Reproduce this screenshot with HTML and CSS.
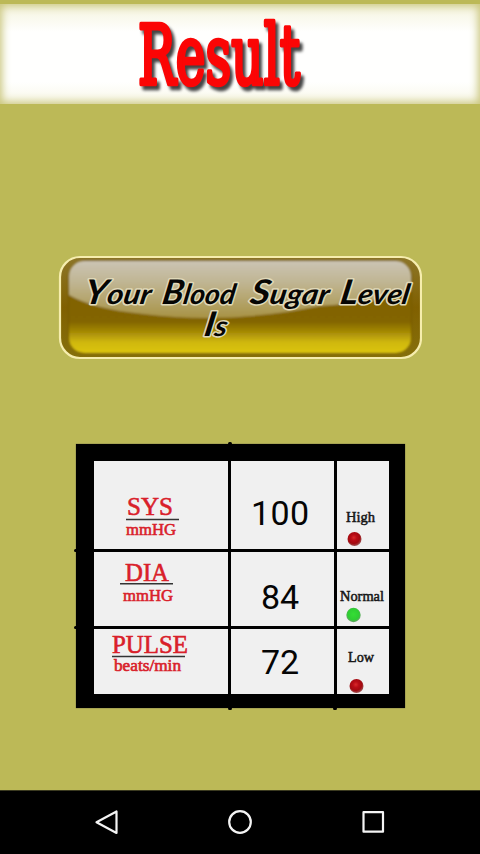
FILE: index.html
```html
<!DOCTYPE html>
<html lang="en">
<head>
<meta charset="utf-8">
<title>Result</title>
<link rel="stylesheet" href="styles.css">
</head>
<body>
<header class="header">
  <svg class="title" width="480" height="100" viewBox="0 0 480 100">
    <text class="title-text" x="138" y="80" textLength="162" lengthAdjust="spacingAndGlyphs">Result</text>
  </svg>
</header>
<main class="content">
  <svg class="banner" width="364" height="106" viewBox="0 0 364 106">
    <defs>
      <linearGradient id="rim" x1="0" y1="0" x2="0" y2="1">
        <stop offset="0" stop-color="#8d7629"/><stop offset=".5" stop-color="#806000"/><stop offset="1" stop-color="#86700b"/>
      </linearGradient>
      <linearGradient id="gold" x1="0" y1="0" x2="0" y2="1">
        <stop offset="0" stop-color="#806200"/><stop offset=".66" stop-color="#836500"/><stop offset=".77" stop-color="#a58a06"/><stop offset=".88" stop-color="#cfb70e"/><stop offset="1" stop-color="#dcc512"/>
      </linearGradient>
      <linearGradient id="shine" x1="0" y1="0" x2="0" y2="1">
        <stop offset="0" stop-color="#cbc4b4"/><stop offset=".4" stop-color="#bfb490"/><stop offset="1" stop-color="#a89345"/>
      </linearGradient>
      <clipPath id="inner"><rect x="11" y="6" width="342" height="92" rx="15"/></clipPath>
      <filter id="soft"><feGaussianBlur stdDeviation="1"/></filter>
    </defs>
    <rect x="2" y="2" width="361" height="101" rx="20" fill="url(#rim)" stroke="#f6edae" stroke-width="2.2"/>
    <g filter="url(#soft)">
      <rect x="10" y="5" width="344" height="94" rx="17" fill="#735600"/>
      <g clip-path="url(#inner)">
        <rect x="11" y="6" width="342" height="92" fill="url(#gold)"/>
        <path d="M11 6H353V36Q320 47 262 51Q170 70 85 59Q35 54 11 40Z" fill="url(#shine)"/>
      </g>
    </g>
    <g class="script">
      <text transform="translate(25 49) skewX(-10)" textLength="67" lengthAdjust="spacingAndGlyphs"><tspan class="cap">Y</tspan>our</text>
      <text transform="translate(103 49) skewX(-10)" textLength="73" lengthAdjust="spacingAndGlyphs"><tspan class="cap">B</tspan>lood</text>
      <text transform="translate(191 49) skewX(-10)" textLength="79" lengthAdjust="spacingAndGlyphs"><tspan class="cap">S</tspan>ugar</text>
      <text transform="translate(281 49) skewX(-10)" textLength="69" lengthAdjust="spacingAndGlyphs"><tspan class="cap">L</tspan>evel</text>
      <text transform="translate(145 81) skewX(-10)" textLength="23" lengthAdjust="spacingAndGlyphs"><tspan class="cap">I</tspan>s</text>
    </g>
  </svg>

  <section class="monitor">
    <i class="tick tick-top"></i><i class="tick tick-bottom-a"></i><i class="tick tick-bottom-b"></i><i class="tick tick-left-a"></i><i class="tick tick-left-b"></i>
    <svg class="cell label" viewBox="0 0 134 88">
      <text class="name" x="33" y="54" textLength="46" lengthAdjust="spacingAndGlyphs">SYS</text>
      <path class="rule" d="M32 58.5H85"/>
      <text class="unit" x="32" y="74" textLength="50" lengthAdjust="spacingAndGlyphs">mmHG</text>
    </svg>
    <svg class="cell value" viewBox="0 0 103 88"><text x="20" y="64" textLength="58">100</text></svg>
    <svg class="cell status" viewBox="0 0 52 88">
      <defs>
        <radialGradient id="red" cx=".45" cy=".4" r=".6"><stop offset="0" stop-color="#d92a2a"/><stop offset=".35" stop-color="#b90d17"/><stop offset=".7" stop-color="#a30a10"/><stop offset="1" stop-color="#9c5555"/></radialGradient>
        <radialGradient id="green" cx=".5" cy=".45" r=".55"><stop offset="0" stop-color="#35dd35"/><stop offset=".7" stop-color="#2fce32"/><stop offset="1" stop-color="#6c9f6c"/></radialGradient>
      </defs>
      <text x="9" y="61" textLength="29" lengthAdjust="spacingAndGlyphs">High</text>
      <circle cx="17.5" cy="78" r="7" fill="url(#red)"/>
    </svg>

    <svg class="cell label" viewBox="0 0 134 74">
      <text class="name" x="31" y="29" textLength="44" lengthAdjust="spacingAndGlyphs">DIA</text>
      <path class="rule" d="M26 31.8H79"/>
      <text class="unit" x="29" y="49" textLength="50" lengthAdjust="spacingAndGlyphs">mmHG</text>
    </svg>
    <svg class="cell value" viewBox="0 0 103 74"><text x="30" y="57" textLength="38">84</text></svg>
    <svg class="cell status" viewBox="0 0 52 74">
      <text x="3" y="49" textLength="44" lengthAdjust="spacingAndGlyphs">Normal</text>
      <circle cx="16.5" cy="63" r="7.2" fill="url(#green)"/>
    </svg>

    <svg class="cell label" viewBox="0 0 134 65">
      <text class="name name-low" x="18" y="24" textLength="76" lengthAdjust="spacingAndGlyphs">PULSE</text>
      <path class="rule" d="M18 27.5H91"/>
      <text class="unit unit-low" x="20" y="42" textLength="67" lengthAdjust="spacingAndGlyphs">beats/min</text>
    </svg>
    <svg class="cell value" viewBox="0 0 103 65"><text x="30" y="45" textLength="38">72</text></svg>
    <svg class="cell status" viewBox="0 0 52 65">
      <text x="11" y="33" textLength="26" lengthAdjust="spacingAndGlyphs">Low</text>
      <circle cx="19.5" cy="57" r="7" fill="url(#red)"/>
    </svg>
  </section>
</main>
<nav class="navbar">
  <svg width="26" height="26" viewBox="0 0 26 26"><path d="M22.5 2.5V24L2.5 13.2Z"/></svg>
  <svg width="26" height="26" viewBox="0 0 26 26"><circle cx="13" cy="13" r="10.8"/></svg>
  <svg width="26" height="26" viewBox="0 0 26 26"><rect x="3.5" y="3.2" width="19.5" height="19.5"/></svg>
</nav>
</body>
</html>
```
FILE: styles.css
```css
* { box-sizing: border-box; }
body {
  margin: 0;
  width: 480px;
  height: 854px;
  display: flex;
  flex-direction: column;
  overflow: hidden;
  background: #bcb957;
}
svg { display: block; }
.header {
  height: 100px;
  margin-top: 4px;
  background: linear-gradient(#f4f3dd, #fffffe 28%, #fffffe 78%, #f8f7e8);
  box-shadow: inset 0 0 9px 2px #c9c57b;
}
.title-text {
  font: 82px "DejaVu Serif", serif;
  fill: #fb0505;
  stroke: #fb0505;
  stroke-width: 4.6px;
  stroke-linejoin: round;
  filter: drop-shadow(3px 4px 1.5px #444);
}
.content {
  flex: 1;
  display: flex;
  flex-direction: column;
  align-items: flex-start;
  padding-top: 151px;
}
.banner { margin-left: 58px; }
.script {
  font: italic bold 28px Lato, sans-serif;
  fill: #060604;
  stroke: #e0d9b9;
  stroke-width: 3px;
  stroke-linejoin: round;
  paint-order: stroke;
}
.cap { font-size: 34px; }
.monitor {
  position: relative;
  display: grid;
  grid-template-columns: 134px 103px 52px;
  grid-template-rows: 88px 74px 65px;
  gap: 3px;
  width: 329px;
  height: 264px;
  margin: 83px 0 0 76px;
  padding: 17px 16px 14px 18px;
  background: #000;
  box-shadow: 0 0 1px #444;
}
.cell {
  width: 100%;
  height: 100%;
  background: #f0f0f0;
}
.label, .status { font-family: "Liberation Serif", serif; }
.label text { fill: #d9202a; stroke: #d9202a; stroke-width: .6px; }
.name { font-size: 26px; }
.name-low { font-size: 25px; }
.unit { font-size: 17px; }
.unit-low { font-size: 16px; }
.rule { stroke: #333; stroke-width: 1.4px; }
.value { font: 34px Roboto, sans-serif; fill: #050505; }
.status { font-size: 15.5px; }
.status text { fill: #161616; stroke: #161616; stroke-width: .55px; }
.tick { position: absolute; width: 4px; height: 3px; background: #000; border-radius: 2px; }
.tick-top { left: 152px; top: -2px; }
.tick-bottom-a { left: 152px; bottom: -2px; }
.tick-bottom-b { left: 257px; bottom: -2px; }
.tick-left-a { left: -2px; top: 105px; }
.tick-left-b { left: -2px; top: 182px; }
.navbar {
  height: 64px;
  display: flex;
  justify-content: center;
  align-items: center;
  gap: 107px;
  padding-bottom: 2px;
  background: #000;
  border-top: 1px solid #3b3a20;
}
.navbar svg { fill: none; stroke: #f4f4f4; stroke-width: 2.2px; stroke-linejoin: round; }
```
